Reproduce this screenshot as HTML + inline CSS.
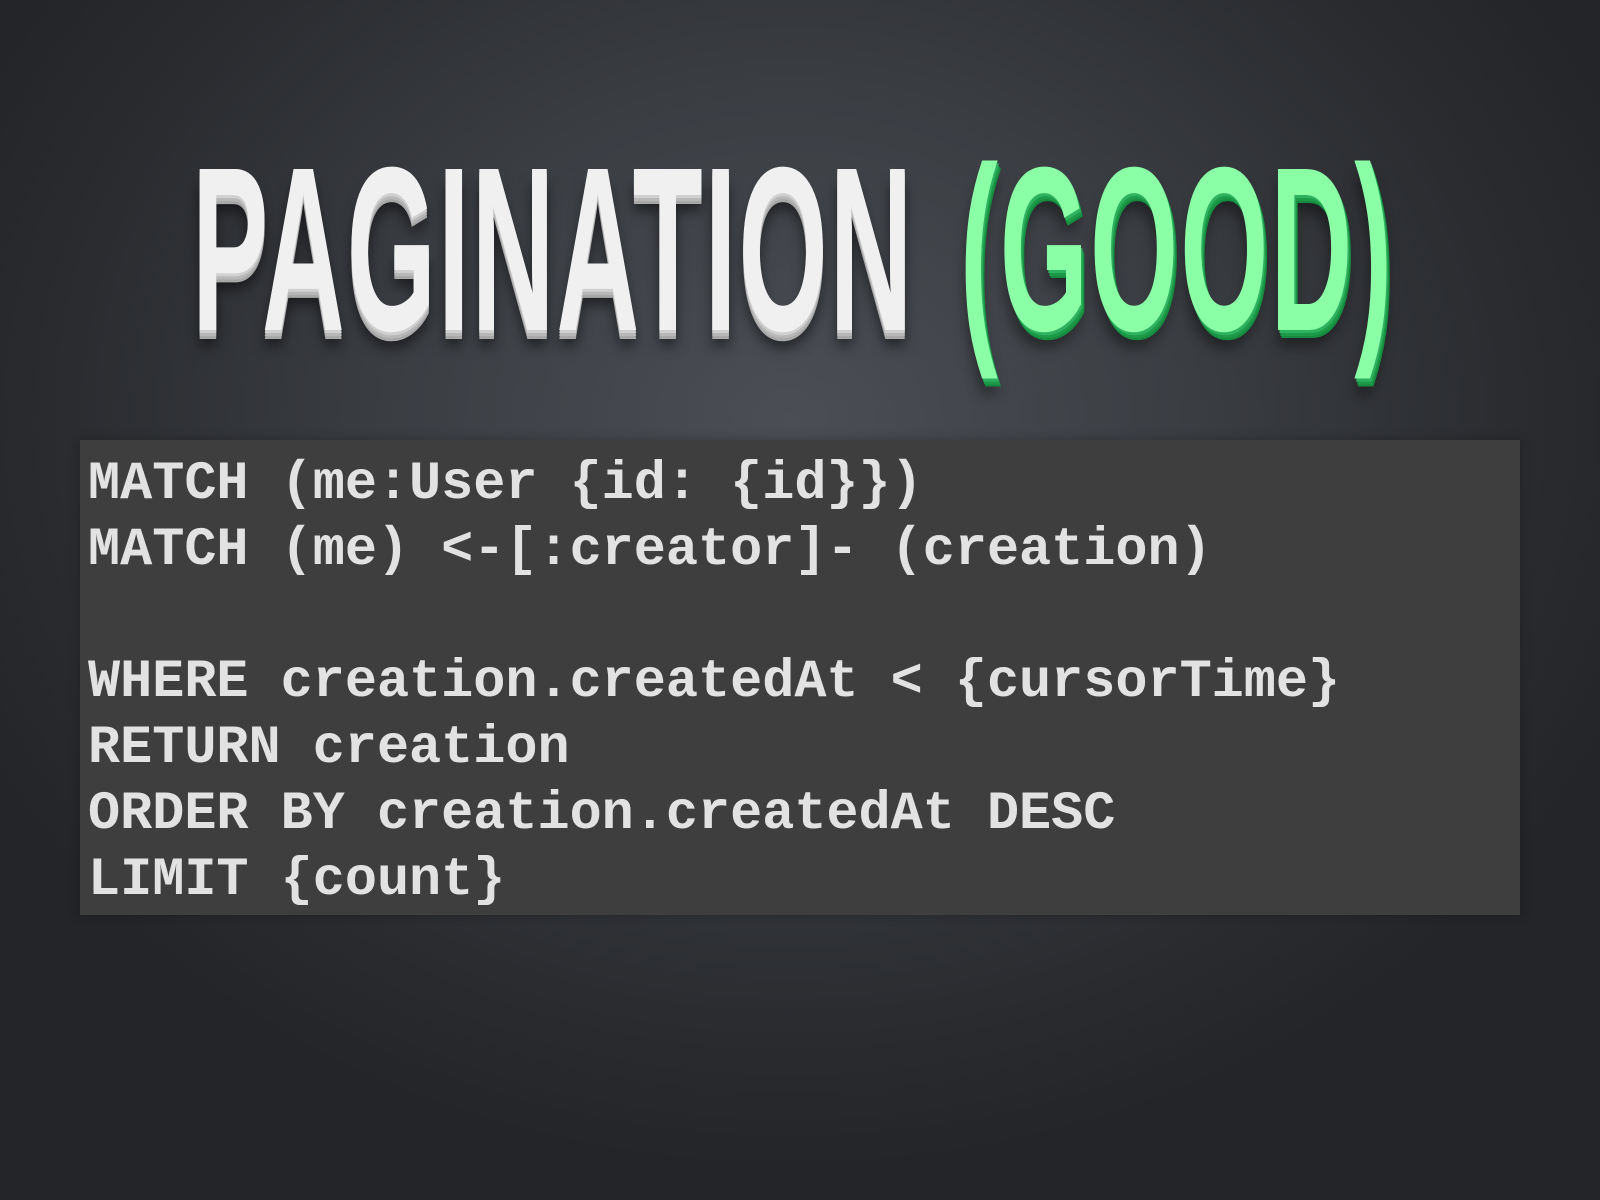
<!DOCTYPE html>
<html><head><style>
html,body{margin:0;padding:0;}
body{width:1600px;height:1200px;overflow:hidden;position:relative;
background:radial-gradient(ellipse 900px 750px at 790px 420px,#4b4f55 0%,#3a3d42 45%,#2a2c30 80%,#232528 100%);
font-family:"Liberation Sans",sans-serif;}
.t{position:absolute;top:132px;font-weight:bold;font-size:234px;line-height:234px;white-space:nowrap;transform-origin:0 0;letter-spacing:4px}
#w{left:192px;color:#f0f0f0;transform:scaleX(0.49);
text-shadow:0 3px 0 #d0d0d0,0 6px 0 #b8b8b8,0 9px 0 #a8a8a8,0 16px 18px rgba(0,0,0,.5);}
#g{left:960px;color:#8affa6;transform:scaleX(0.485);
text-shadow:3px 3px 0 #2fb260,5px 6px 0 #1c9a48,7px 8px 0 #168a3e,0 16px 18px rgba(0,0,0,.4);}
#code{position:absolute;left:80px;top:440px;width:1440px;height:475px;background:#3e3e3e;box-shadow:0 0 10px rgba(0,0,0,.25)}
pre{margin:0;position:absolute;left:8px;top:12px;font-family:"Liberation Mono",monospace;font-weight:bold;font-size:53.5px;line-height:66px;color:#e2e2e2}
</style></head><body>
<div class="t" id="w">PAGINATION</div>
<div class="t" id="g">(GOOD)</div>
<div id="code"><pre>MATCH (me:User {id: {id}})
MATCH (me) &lt;-[:creator]- (creation)

WHERE creation.createdAt &lt; {cursorTime}
RETURN creation
ORDER BY creation.createdAt DESC
LIMIT {count}</pre></div>
</body></html>
